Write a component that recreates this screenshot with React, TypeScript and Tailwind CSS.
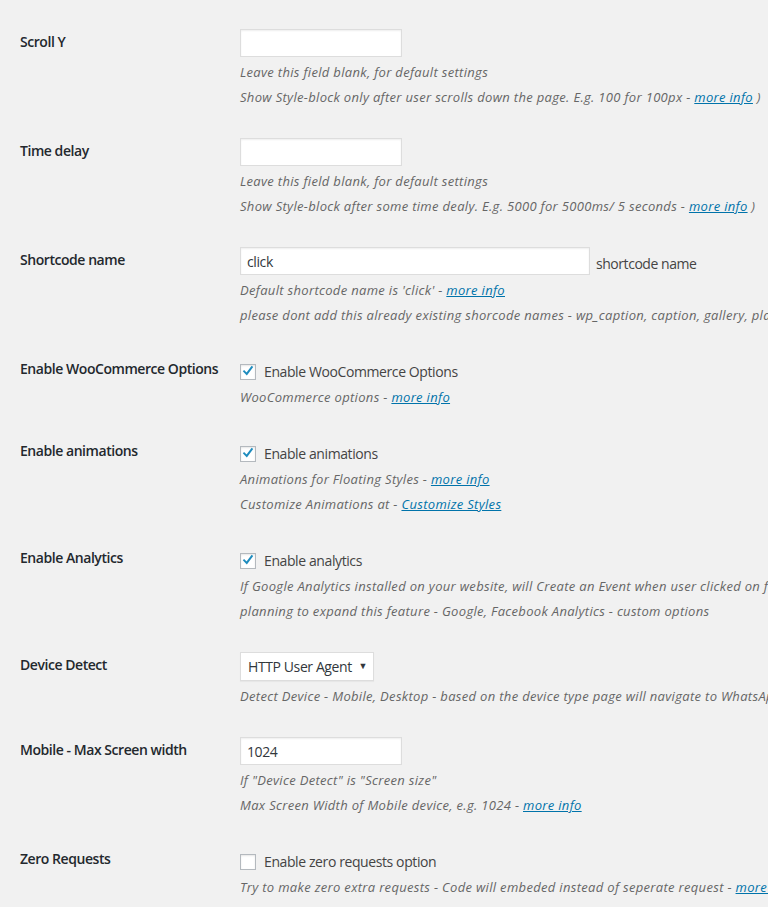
import React from "react";

type Line = React.ReactNode;

const font = { fontFamily: '"Open Sans", "Noto Sans", sans-serif' };

function More({ children = "more info" }: { children?: React.ReactNode }) {
  return <a href="#" className="text-[#0073aa] underline">{children}</a>;
}

function Desc({ children, first }: { children: Line; first?: boolean }) {
  return (
    <p className={`${first ? "mt-0" : "mt-[5px]"} text-[13px] leading-[20px] italic tracking-[0.32px] text-[#666] whitespace-nowrap`}>
      {children}
    </p>
  );
}

function Check({ checked }: { checked?: boolean }) {
  return (
    <span className="w-4 h-4 shrink-0 bg-white border border-[#b4b9be] shadow-[inset_0_1px_2px_rgba(0,0,0,0.1)] flex items-center justify-center">
      {checked && (
        <svg viewBox="0 0 20 20" className="w-[18px] h-[18px] -mt-[1px]">
          <path d="M4.5 10.5 L8.2 14.2 L15.5 4.5" fill="none" stroke="#1e8cbe" strokeWidth="2.8" strokeLinecap="square" />
        </svg>
      )}
    </span>
  );
}

function Row({ label, children }: { label: string; children: React.ReactNode }) {
  return (
    <div className="flex">
      <div className="w-[220px] shrink-0 pl-5 pt-5 text-[14px] leading-[18px] font-semibold tracking-[-0.45px] text-[#23282d] whitespace-nowrap">{label}</div>
      <div className="pt-4 pb-[15px] pl-5">{children}</div>
    </div>
  );
}

function TextInput({ value = "", w }: { value?: string; w: string }) {
  return (
    <div className={`${w} h-7 bg-white border border-[#ddd] shadow-[inset_0_1px_2px_rgba(0,0,0,0.07)] px-[6px] flex items-center text-[14px] tracking-[-0.4px] text-[#32373c]`}>
      {value}
    </div>
  );
}

function CheckLine({ checked, text }: { checked?: boolean; text: string }) {
  return (
    <div className="h-[31px] flex items-center gap-2 text-[14px] tracking-[-0.4px] text-[#444] whitespace-nowrap">
      <Check checked={checked} />
      <span>{text}</span>
    </div>
  );
}

export default function App() {
  return (
    <div className="min-h-[907px] bg-[#f1f1f1] pt-[13px] overflow-hidden" style={font}>
      <Row label="Scroll Y">
        <TextInput w="w-[162px]" />
        <Desc>Leave this field blank, for default settings</Desc>
        <Desc>Show Style-block only after user scrolls down the page. E.g. 100 for 100px - <More /> )</Desc>
      </Row>
      <Row label="Time delay">
        <TextInput w="w-[162px]" />
        <Desc>Leave this field blank, for default settings</Desc>
        <Desc>Show Style-block after some time dealy. E.g. 5000 for 5000ms/ 5 seconds - <More /> )</Desc>
      </Row>
      <Row label="Shortcode name">
        <div className="flex items-center gap-[6px]">
          <TextInput value="click" w="w-[350px]" />
          <span className="text-[14px] tracking-[-0.45px] text-[#444] mt-1 whitespace-nowrap">shortcode name</span>
        </div>
        <Desc>Default shortcode name is 'click' - <More /></Desc>
        <Desc>please dont add this already existing shorcode names - wp_caption, caption, gallery, playlist, audio, video, embed</Desc>
      </Row>
      <Row label="Enable WooCommerce Options">
        <CheckLine checked text="Enable WooCommerce Options" />
        <Desc first>WooCommerce options - <More /></Desc>
      </Row>
      <Row label="Enable animations">
        <CheckLine checked text="Enable animations" />
        <Desc first>Animations for Floating Styles - <More /></Desc>
        <Desc>Customize Animations at - <More>Customize Styles</More></Desc>
      </Row>
      <Row label="Enable Analytics">
        <CheckLine checked text="Enable analytics" />
        <Desc first>If Google Analytics installed on your website, will Create an Event when user clicked on floating style</Desc>
        <Desc>planning to expand this feature - Google, Facebook Analytics - custom options</Desc>
      </Row>
      <Row label="Device Detect">
        <div className="w-[134px] h-[29px] bg-white border border-[#ddd] shadow-[0_1px_1px_rgba(0,0,0,0.04)] pl-[7px] pr-[6px] flex items-center justify-between text-[14px] tracking-[-0.4px] text-[#32373c]">
          <span className="whitespace-nowrap">HTTP User Agent</span>
          <span className="text-[9px] leading-none -mt-[2px]">▼</span>
        </div>
        <Desc>Detect Device - Mobile, Desktop - based on the device type page will navigate to WhatsApp web or mobile</Desc>
      </Row>
      <Row label="Mobile - Max Screen width">
        <TextInput value="1024" w="w-[162px]" />
        <Desc>If "Device Detect" is "Screen size"</Desc>
        <Desc>Max Screen Width of Mobile device, e.g. 1024 - <More /></Desc>
      </Row>
      <Row label="Zero Requests">
        <CheckLine text="Enable zero requests option" />
        <Desc first>Try to make zero extra requests - Code will embeded instead of seperate request - <More /></Desc>
      </Row>
    </div>
  );
}
